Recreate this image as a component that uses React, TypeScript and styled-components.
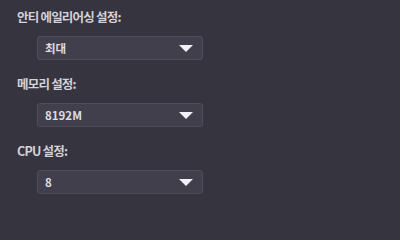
import React, { useState } from 'react'
import styled, { createGlobalStyle } from 'styled-components'

const GlobalStyle = createGlobalStyle`
    html, body {
        margin: 0;
        padding: 0;
        background-color: #36343f;
    }
    body {
        font-family: 'Noto Sans CJK KR', 'Noto Sans', sans-serif;
    }
`

const SettingsPanelStyled = styled.div`
    width: 400px;
    min-height: 200px;
    padding: 7px 0 0 17px;
    box-sizing: border-box;
    display: flex;
    flex-direction: column;
    background-color: #36343f;
`
const FieldStyled = styled.div`
    display: flex;
    flex-direction: column;
    margin-bottom: 14px;
`
const FieldLabelStyled = styled.div`
    height: 20px;
    line-height: 20px;
    font-size: 12.5px;
    font-weight: 700;
    color: #d3d2d8;
    letter-spacing: -0.8px;
`
const SelectStyled = styled.div`
    margin: 9px 0 0 20px;
    width: 166px;
    height: 24px;
    box-sizing: border-box;
    padding: 0 9px 0 7px;
    display: flex;
    align-items: center;
    justify-content: space-between;
    background-color: #423f4c;
    border: 1px solid #4f4c5b;
    border-radius: 3px;
    cursor: pointer;
`
const SelectValueStyled = styled.span`
    font-size: 11.5px;
    font-weight: 700;
    color: #dddce2;
`
const CaretStyled = styled.span`
    width: 0;
    height: 0;
    border-left: 7px solid transparent;
    border-right: 7px solid transparent;
    border-top: 7px solid #f2f2f5;
`

const fields = [
    { id: 'aa', label: '안티 에일리어싱 설정:', value: '최대' },
    { id: 'mem', label: '메모리 설정:', value: '8192M' },
    { id: 'cpu', label: 'CPU 설정:', value: '8' },
]

const App = () => {
    const [values] = useState(fields)

    return (
        <>
            <GlobalStyle />
            <SettingsPanelStyled>
                {values.map((item) => (
                    <FieldStyled key={item.id}>
                        <FieldLabelStyled>{item.label}</FieldLabelStyled>
                        <SelectStyled>
                            <SelectValueStyled>{item.value}</SelectValueStyled>
                            <CaretStyled />
                        </SelectStyled>
                    </FieldStyled>
                ))}
            </SettingsPanelStyled>
        </>
    )
}

export default App
